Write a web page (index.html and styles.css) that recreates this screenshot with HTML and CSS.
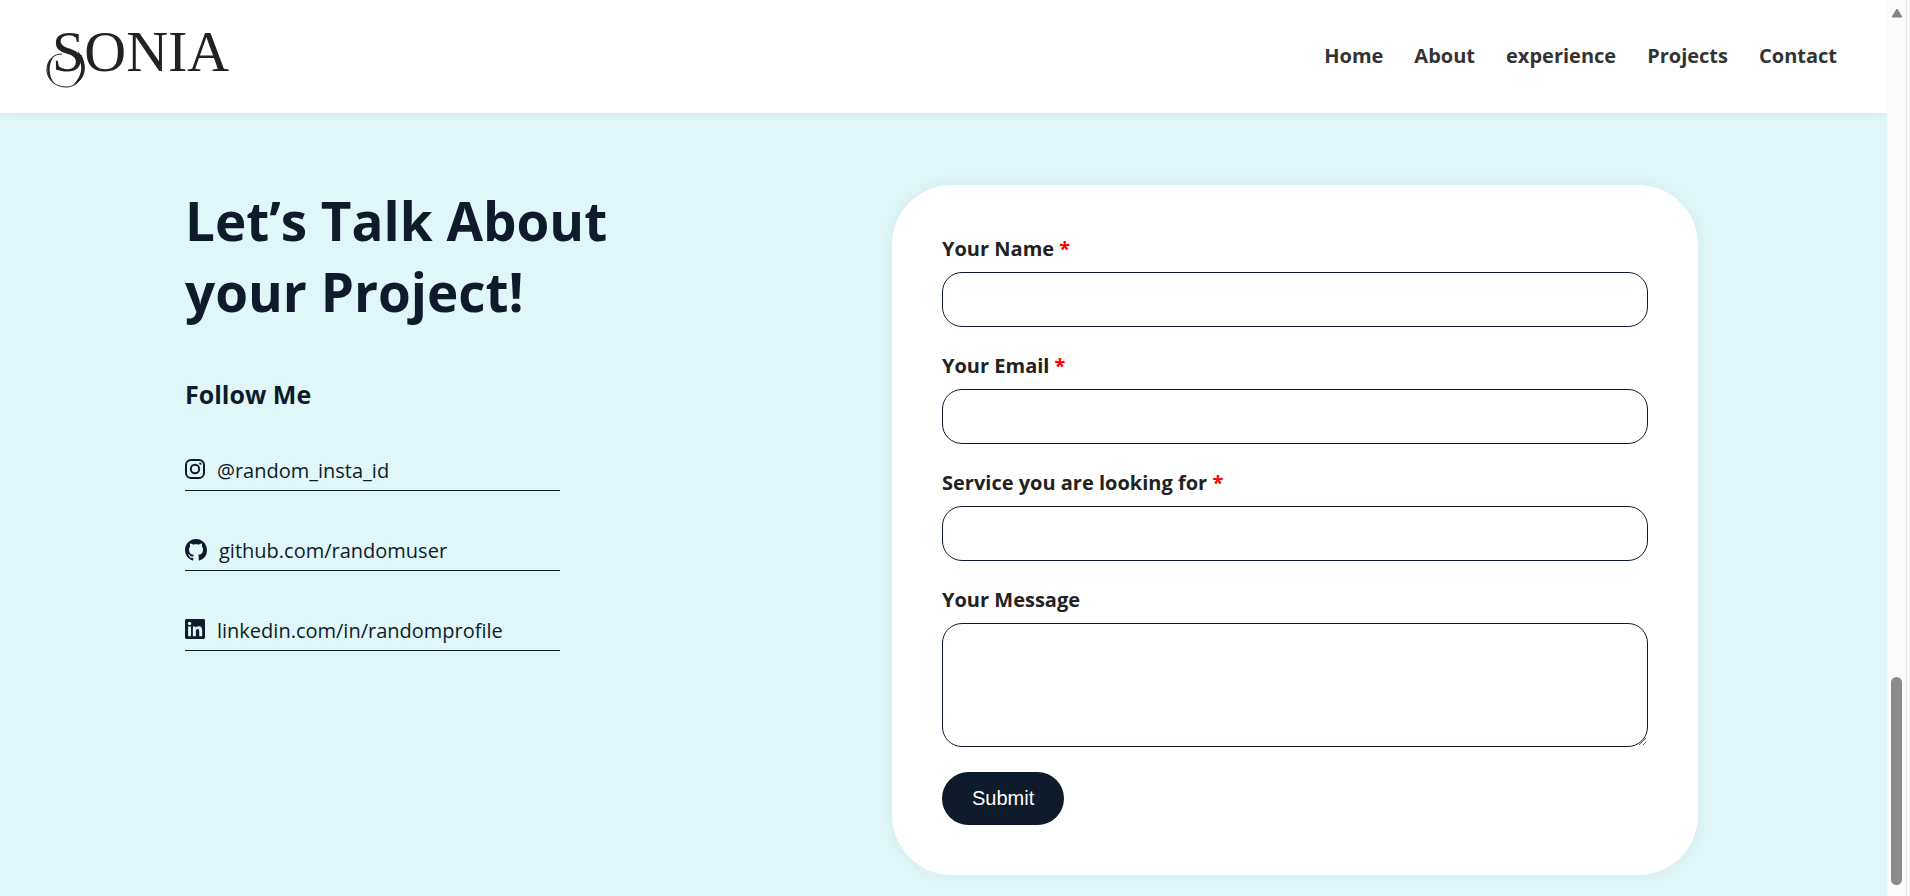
FILE: index.html
```html
<!DOCTYPE html>
<html lang="en">
<head>
<meta charset="utf-8">
<title>Sonia - Contact</title>
<link rel="stylesheet" href="styles.css">
</head>
<body>
<div class="page">
  <header class="header">
    <a class="logo" href="#home" aria-label="Sonia">
      <svg width="200" height="86" viewBox="0 -10 200 86">
        <text class="logo-text" x="7" y="48">SONIA</text>
        <path d="M36 32C42 45 37 64 21 64C8 64 1 54 2 45C3 36 9 31 17 31" fill="none" stroke="#222" stroke-width="1"/>
        <path d="M33 28C45 42 40 58 28 62C37 53 38 44 34 36Z" fill="#222"/>
        <path d="M9 33C0 39 0 54 10 61C3 53 3 41 9 33Z" fill="#222"/>
      </svg>
    </a>
    <nav class="nav">
      <a href="#home">Home</a>
      <a href="#about">About</a>
      <a href="#experience">experience</a>
      <a href="#projects">Projects</a>
      <a href="#contact">Contact</a>
    </nav>
  </header>
  <main class="contact">
    <section class="intro">
      <h1>Let’s Talk About<br>your Project!</h1>
      <h2>Follow Me</h2>
      <ul class="social">
        <li><a href="#instagram">
          <svg width="20" height="20" viewBox="0 0 20 20" fill="none" stroke="currentColor" stroke-width="2"><rect x="1" y="1" width="18" height="18" rx="5"/><circle cx="10" cy="10" r="4.2"/><circle cx="15.4" cy="4.6" r="1.2" fill="currentColor" stroke="none"/></svg>
          <span>@random_insta_id</span></a></li>
        <li><a href="#github">
          <svg width="22" height="22" viewBox="0 0 16 16" fill="currentColor"><path d="M8 0C3.58 0 0 3.58 0 8c0 3.54 2.29 6.53 5.47 7.59.4.07.55-.17.55-.38 0-.19-.01-.82-.01-1.49-2.01.37-2.53-.49-2.69-.94-.09-.23-.48-.94-.82-1.13-.28-.15-.68-.52-.01-.53.63-.01 1.08.58 1.23.82.72 1.21 1.87.87 2.33.66.07-.52.28-.87.51-1.07-1.78-.2-3.64-.89-3.64-3.95 0-.87.31-1.59.82-2.15-.08-.2-.36-1.02.08-2.12 0 0 .67-.21 2.2.82.64-.18 1.32-.27 2-.27s1.36.09 2 .27c1.53-1.04 2.2-.82 2.2-.82.44 1.1.16 1.92.08 2.12.51.56.82 1.27.82 2.15 0 3.07-1.87 3.75-3.65 3.95.29.25.54.73.54 1.48 0 1.07-.01 1.93-.01 2.2 0 .21.15.46.55.38A8.01 8.01 0 0 0 16 8c0-4.42-3.58-8-8-8z"/></svg>
          <span>github.com/randomuser</span></a></li>
        <li><a href="#linkedin">
          <svg width="20" height="20" viewBox="0 0 448 448" fill="currentColor"><path d="M416 0H31.900C14.300 0 0 14.500 0 32.300v383.400C0 433.500 14.300 448 31.900 448H416c17.600 0 32-14.500 32-32.300V32.300C448 14.500 433.600 0 416 0zM135.400 384H69V170.200h66.500V384zM102.200 141c-21.300 0-38.500-17.300-38.500-38.500S80.900 64 102.200 64c21.200 0 38.500 17.300 38.500 38.500 0 21.300-17.200 38.500-38.500 38.500zM384.300 384h-66.400V280c0-24.800-.5-56.700-34.500-56.700-34.600 0-39.900 27-39.900 54.900V384h-66.400V170.200h63.700v29.200h.9c8.900-16.800 30.600-34.500 62.900-34.500 67.200 0 79.700 44.300 79.700 101.900V384z"/></svg>
          <span>linkedin.com/in/randomprofile</span></a></li>
      </ul>
    </section>
    <form class="card">
      <div class="field"><label for="name">Your Name <span class="required">*</span></label><input id="name" type="text" required></div>
      <div class="field"><label for="email">Your Email <span class="required">*</span></label><input id="email" type="email" required></div>
      <div class="field"><label for="service">Service you are looking for <span class="required">*</span></label><input id="service" type="text" required></div>
      <div class="field"><label for="message">Your Message</label><textarea id="message"></textarea></div>
      <button type="submit">Submit</button>
    </form>
  </main>
</div>
<div class="scrollbar" aria-hidden="true">
  <svg width="12" height="10" viewBox="0 0 12 10"><path d="M6 1L11 9H1Z" fill="#858585" stroke="#858585" stroke-linejoin="round"/></svg>
  <div class="thumb"></div>
</div>
</body>
</html>
```

FILE: styles.css
```css
* {
  box-sizing: border-box;
}

body {
  margin: 0;
  height: 100vh;
  display: flex;
  overflow: hidden;
  font-family: "Open Sans", sans-serif;
  color: #222;
  background: #dff7f9;
}

.page {
  flex: 1;
  display: flex;
  flex-direction: column;
}

.header {
  display: flex;
  justify-content: space-between;
  align-items: center;
  height: 113px;
  padding: 0 50px 2px 45px;
  background: #fff;
  box-shadow: 0 2px 10px rgba(0, 0, 0, 0.05);
}

.logo svg {
  display: block;
}

.logo-text {
  font-family: "Liberation Serif", serif;
  font-size: 58px;
  fill: #222;
}

.nav {
  display: flex;
  gap: 31px;
}

.nav a {
  font-size: 20px;
  line-height: 28px;
  font-weight: 700;
  color: #333;
  text-decoration: none;
}

.contact {
  display: grid;
  grid-template-columns: 707fr 806fr;
  align-items: start;
  padding: 72px 189px 0 185px;
}

h1 {
  margin: 0;
  font-size: 53px;
  line-height: 71px;
  color: #0f1b2b;
}

h2 {
  margin: 49px 0 0;
  font-size: 25px;
  line-height: 36px;
  color: #0f1b2b;
}

.social {
  width: 375px;
  margin: 39px 0 0;
  padding: 0;
  list-style: none;
  display: flex;
  flex-direction: column;
  gap: 40px;
}

.social a {
  display: flex;
  align-items: flex-start;
  gap: 12px;
  height: 40px;
  padding-top: 8px;
  border-bottom: 1px solid #0f1b2b;
  font-size: 20px;
  line-height: 24px;
  color: #0f1b2b;
  text-decoration: none;
}

.card {
  padding: 50px;
  border-radius: 60px;
  background: #fff;
  box-shadow: 0 0 20px rgba(0, 0, 0, 0.05);
}

.field {
  display: flex;
  flex-direction: column;
  gap: 10px;
  margin-bottom: 25px;
}

label {
  font-size: 20px;
  line-height: 27px;
  font-weight: 700;
}

.required {
  color: #f00;
}

input,
textarea {
  width: 100%;
  height: 55px;
  padding: 12px 16px;
  border: 1px solid #0f1b2b;
  border-radius: 20px;
  background: #fff;
  font: inherit;
}

textarea {
  height: 124px;
  resize: vertical;
}

button {
  display: block;
  padding: 15px 30px;
  border: 0;
  border-radius: 30px;
  background: #0f1b2b;
  color: #fff;
  font-family: "Liberation Sans", Arial, sans-serif;
  font-size: 20px;
  line-height: 23px;
}

.scrollbar {
  width: 23px;
  display: flex;
  flex-direction: column;
  justify-content: space-between;
  padding: 8px 7px 11px 4px;
  background: linear-gradient(to right, #fbfbfb 19px, #e4e4e4 19px, #e4e4e4 20px, #fbfbfb 20px);
}

.thumb {
  width: 11px;
  height: 208px;
  border-radius: 6px;
  background: #8b8b8b;
}
```
